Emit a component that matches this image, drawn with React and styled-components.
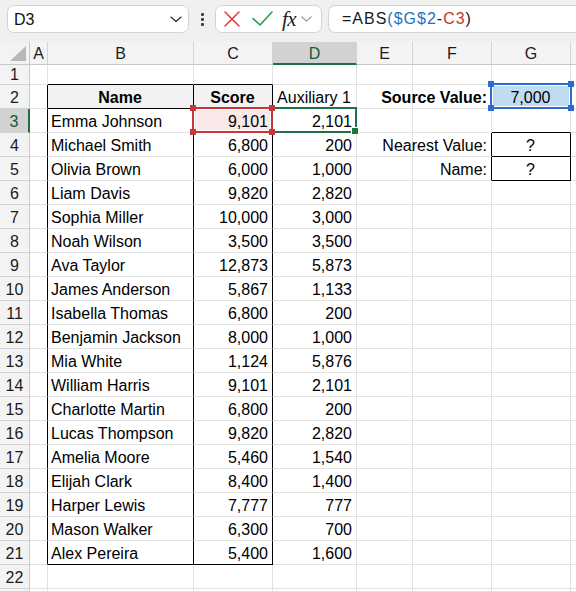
import React from 'react';
import styled, { createGlobalStyle } from 'styled-components';

const GlobalStyle = createGlobalStyle`
  html, body { margin: 0; padding: 0; background: #fff; }
  body {
    width: 576px; height: 592px; overflow: hidden;
    font-family: "Liberation Sans", Arial, sans-serif;
  }
`;

const GRID = '#e1e1e1';
const BLACK = '#000';
const GREEN = '#1e7145';

const Page = styled.div`
  width: 576px;
  height: 592px;
  overflow: hidden;
  background: #fff;
`;

const Toolbar = styled.div`
  height: 42px;
  box-sizing: border-box;
  background: #f0f0f0;
  display: flex;
  align-items: flex-start;
  padding: 5px 0 0 7px;
`;

const NameBox = styled.div`
  width: 182px;
  height: 28px;
  box-sizing: border-box;
  background: #fff;
  border: 1px solid #d4d4d4;
  border-radius: 7px;
  display: flex;
  align-items: center;
  justify-content: space-between;
  padding: 1px 6px 0 6px;
  font-size: 16px;
  color: #111;
`;

const Grip = styled.div`
  width: 26px;
  height: 28px;
  display: flex;
  flex-direction: column;
  align-items: center;
  justify-content: center;
  gap: 2px;
  & > span {
    width: 3px; height: 3px; background: #404040; border-radius: 1px;
  }
`;

const FxGroup = styled.div`
  width: 107px;
  height: 28px;
  box-sizing: border-box;
  background: #fff;
  border: 1px solid #d4d4d4;
  border-radius: 7px;
  display: flex;
  align-items: center;
  padding-left: 7px;
`;

const Spacer = styled.span`
  width: ${p => p.$w}px;
  flex: none;
`;

const FxText = styled.span`
  font-family: "Liberation Serif", "Times New Roman", serif;
  font-style: italic;
  font-size: 21px;
  color: #222;
  margin-left: 9px;
  letter-spacing: -0.5px;
  line-height: 1;
`;

const FormulaBox = styled.div`
  flex: 1;
  height: 28px;
  margin-left: 6px;
  box-sizing: border-box;
  background: #fff;
  border: 1px solid #d4d4d4;
  border-right: none;
  border-radius: 7px 0 0 7px;
  display: flex;
  align-items: center;
  padding-left: 13px;
  font-size: 16px;
  letter-spacing: 1px;
  color: #1a1a1a;
`;

const Token = styled.span`
  color: ${p => p.$color || '#1a1a1a'};
`;

const Sheet = styled.div`
  display: grid;
  grid-template-columns: 30px 18px 146px 79px 84px 56px 79px 79px 1fr;
  grid-template-rows: 23px 20px repeat(21, 24px);
  font-size: 16px;
  color: #000;
`;

const Corner = styled.div`
  background: #f3f3f3;
  border-right: 1px solid #c9c9c9;
  border-bottom: 1px solid #c9c9c9;
  box-sizing: border-box;
  position: relative;
  &::after {
    content: '';
    position: absolute;
    right: 3px;
    bottom: 3px;
    width: 0; height: 0;
    border-left: 16px solid transparent;
    border-bottom: 15px solid #b8b8b8;
  }
`;

const ColHead = styled.div`
  box-sizing: border-box;
  background: ${p => (p.$active ? '#d2d2d2' : '#f3f3f3')};
  border-right: 1px solid #d3d3d3;
  border-bottom: ${p => (p.$active ? `2px solid ${GREEN}` : '1px solid #c9c9c9')};
  color: ${p => (p.$active ? '#145a32' : '#1a1a1a')};
  display: flex;
  align-items: center;
  justify-content: center;
  padding-top: ${p => (p.$active ? '2px' : '1px')};
  font-size: 16px;
`;

const RowHead = styled.div`
  box-sizing: border-box;
  background: ${p => (p.$active ? '#d2d2d2' : '#f3f3f3')};
  border-right: ${p => (p.$active ? `2px solid ${GREEN}` : '1px solid #c9c9c9')};
  border-bottom: 1px solid #d3d3d3;
  color: ${p => (p.$active ? '#145a32' : '#1a1a1a')};
  display: flex;
  align-items: center;
  justify-content: center;
  padding-top: ${p => (p.$short ? '0' : '2px')};
  font-size: 16px;
`;

const Cell = styled.div`
  position: relative;
  box-sizing: border-box;
  min-width: 0;
  border-right: 1px solid ${p => p.$rb || GRID};
  border-bottom: 1px solid ${p => p.$bb || GRID};
  background: ${p => p.$fill || 'transparent'};
  display: flex;
  align-items: center;
  justify-content: ${p =>
    p.$align === 'right' ? 'flex-end' : p.$align === 'center' ? 'center' : 'flex-start'};
  padding: 2px 4px 0 3px;
  font-weight: ${p => (p.$bold ? 700 : 400)};
  white-space: nowrap;
`;

const Mark = styled.div`
  position: absolute;
  left: -2px;
  top: -2px;
  right: ${p => p.$right ?? -1}px;
  bottom: -1px;
  border: 2px solid ${p => p.$color};
  box-shadow: ${p => (p.$inner ? 'inset 0 0 0 1px #fff' : 'none')};
  pointer-events: none;
  z-index: ${p => p.$z || 2};
`;

const Knob = styled.span`
  position: absolute;
  width: 6px;
  height: 6px;
  background: ${p => p.$color};
  ${p => (p.$v === 't' ? 'top: -4px;' : 'bottom: -4px;')}
  ${p => (p.$h === 'l' ? 'left: -4px;' : 'right: -4px;')}
`;

const FillHandle = styled.span`
  position: absolute;
  width: 6px;
  height: 6px;
  right: -4px;
  bottom: -4px;
  background: ${GREEN};
  border: 1px solid #fff;
`;

const ChevronDown = ({ color = '#333', size = 12 }) => (
  <svg width={size} height={size * 0.6} viewBox="0 0 12 7" fill="none">
    <path d="M1 1 L6 5.5 L11 1" stroke={color} strokeWidth="1.3" strokeLinecap="round" strokeLinejoin="round" />
  </svg>
);

const CancelIcon = () => (
  <svg width="18" height="18" viewBox="0 0 18 18" fill="none">
    <path d="M2 2 L16 16 M16 2 L2 16" stroke="#e2383c" strokeWidth="1.5" strokeLinecap="round" />
  </svg>
);

const EnterIcon = () => (
  <svg width="22" height="18" viewBox="0 0 22 18" fill="none">
    <path d="M2 8.5 L9 15 L21 2" stroke="#2f9a48" strokeWidth="1.6" strokeLinecap="round" strokeLinejoin="round" />
  </svg>
);

const people = [
  ['Emma Johnson', '9,101', '2,101'],
  ['Michael Smith', '6,800', '200'],
  ['Olivia Brown', '6,000', '1,000'],
  ['Liam Davis', '9,820', '2,820'],
  ['Sophia Miller', '10,000', '3,000'],
  ['Noah Wilson', '3,500', '3,500'],
  ['Ava Taylor', '12,873', '5,873'],
  ['James Anderson', '5,867', '1,133'],
  ['Isabella Thomas', '6,800', '200'],
  ['Benjamin Jackson', '8,000', '1,000'],
  ['Mia White', '1,124', '5,876'],
  ['William Harris', '9,101', '2,101'],
  ['Charlotte Martin', '6,800', '200'],
  ['Lucas Thompson', '9,820', '2,820'],
  ['Amelia Moore', '5,460', '1,540'],
  ['Elijah Clark', '8,400', '1,400'],
  ['Harper Lewis', '7,777', '777'],
  ['Mason Walker', '6,300', '700'],
  ['Alex Pereira', '5,400', '1,600'],
];

const COLS = ['A', 'B', 'C', 'D', 'E', 'F', 'G', 'H'];

function cellSpec(r, c) {
  const inTable = r >= 2 && r <= 21;
  const p = people[r - 3];
  const s = {};
  if (c === 'A' && inTable) s.rb = BLACK;
  if (c === 'B' || c === 'C') {
    if (r === 1 || r === 2 || r === 21) s.bb = BLACK;
    if (inTable) s.rb = BLACK;
    if (r === 2) {
      s.fill = '#f2f2f2';
      s.bold = true;
      s.align = 'center';
      s.text = c === 'B' ? 'Name' : 'Score';
    } else if (p) {
      s.text = c === 'B' ? p[0] : p[1];
      s.align = c === 'B' ? 'left' : 'right';
    }
    if (c === 'C' && r === 3) {
      s.fill = '#fbe8e8';
      s.mark = 'ref';
    }
  }
  if (c === 'D') {
    if (r === 2) {
      s.text = 'Auxiliary 1';
      s.align = 'center';
    } else if (p) {
      s.text = p[2];
      s.align = 'right';
    }
    if (r === 3) s.mark = 'active';
  }
  if (c === 'F') {
    if (r === 2) { s.text = 'Source Value:'; s.bold = true; s.align = 'right'; }
    if (r === 4) { s.text = 'Nearest Value:'; s.align = 'right'; s.rb = BLACK; }
    if (r === 5) { s.text = 'Name:'; s.align = 'right'; s.rb = BLACK; }
  }
  if (c === 'G') {
    if (r === 2) { s.text = '7,000'; s.align = 'center'; s.fill = '#c0dcf3'; s.mark = 'source'; }
    if (r === 3) s.bb = BLACK;
    if (r === 4 || r === 5) { s.text = '?'; s.align = 'center'; s.rb = BLACK; s.bb = BLACK; }
  }
  return s;
}

function renderMark(kind) {
  if (kind === 'ref') {
    const red = '#c4373a';
    return (
      <Mark $color={red} $inner $z={4}>
        <Knob $color={red} $v="t" $h="l" />
        <Knob $color={red} $v="t" $h="r" />
        <Knob $color={red} $v="b" $h="l" />
        <Knob $color={red} $v="b" $h="r" />
      </Mark>
    );
  }
  if (kind === 'source') {
    const blue = '#2e6bd0';
    return (
      <Mark $color={blue} $inner $right={-2} $z={3}>
        <Knob $color={blue} $v="t" $h="l" />
        <Knob $color={blue} $v="t" $h="r" />
        <Knob $color={blue} $v="b" $h="l" />
        <Knob $color={blue} $v="b" $h="r" />
      </Mark>
    );
  }
  if (kind === 'active') {
    return (
      <Mark $color={GREEN} $z={3}>
        <FillHandle />
      </Mark>
    );
  }
  return null;
}

export default function App() {
  const rows = Array.from({ length: 23 }, (_, i) => i + 1);
  return (
    <Page>
      <GlobalStyle />
      <Toolbar>
        <NameBox>
          <span>D3</span>
          <ChevronDown color="#333" size={12} />
        </NameBox>
        <Grip>
          <span />
          <span />
          <span />
        </Grip>
        <FxGroup>
          <CancelIcon />
          <Spacer $w={10} />
          <EnterIcon />
          <FxText>fx</FxText>
          <Spacer $w={5} />
          <ChevronDown color="#9a9a9a" size={11} />
        </FxGroup>
        <FormulaBox>
          <Token>=ABS</Token>
          <Token $color="#1f6fc0">(</Token>
          <Token $color="#1f6fc0">$G$2</Token>
          <Token>-</Token>
          <Token $color="#c0392b">C3</Token>
          <Token>)</Token>
        </FormulaBox>
      </Toolbar>
      <Sheet>
        <Corner />
        {COLS.map(c => (
          <ColHead key={c} $active={c === 'D'}>
            {c === 'H' ? '' : c}
          </ColHead>
        ))}
        {rows.map(r => (
          <React.Fragment key={r}>
            <RowHead $active={r === 3} $short={r === 1}>{r <= 22 ? r : ''}</RowHead>
            {COLS.map(c => {
              const s = cellSpec(r, c);
              return (
                <Cell
                  key={c}
                  $rb={s.rb}
                  $bb={s.bb}
                  $fill={s.fill}
                  $bold={s.bold}
                  $align={s.align}
                >
                  {s.text}
                  {s.mark && renderMark(s.mark)}
                </Cell>
              );
            })}
          </React.Fragment>
        ))}
      </Sheet>
    </Page>
  );
}
